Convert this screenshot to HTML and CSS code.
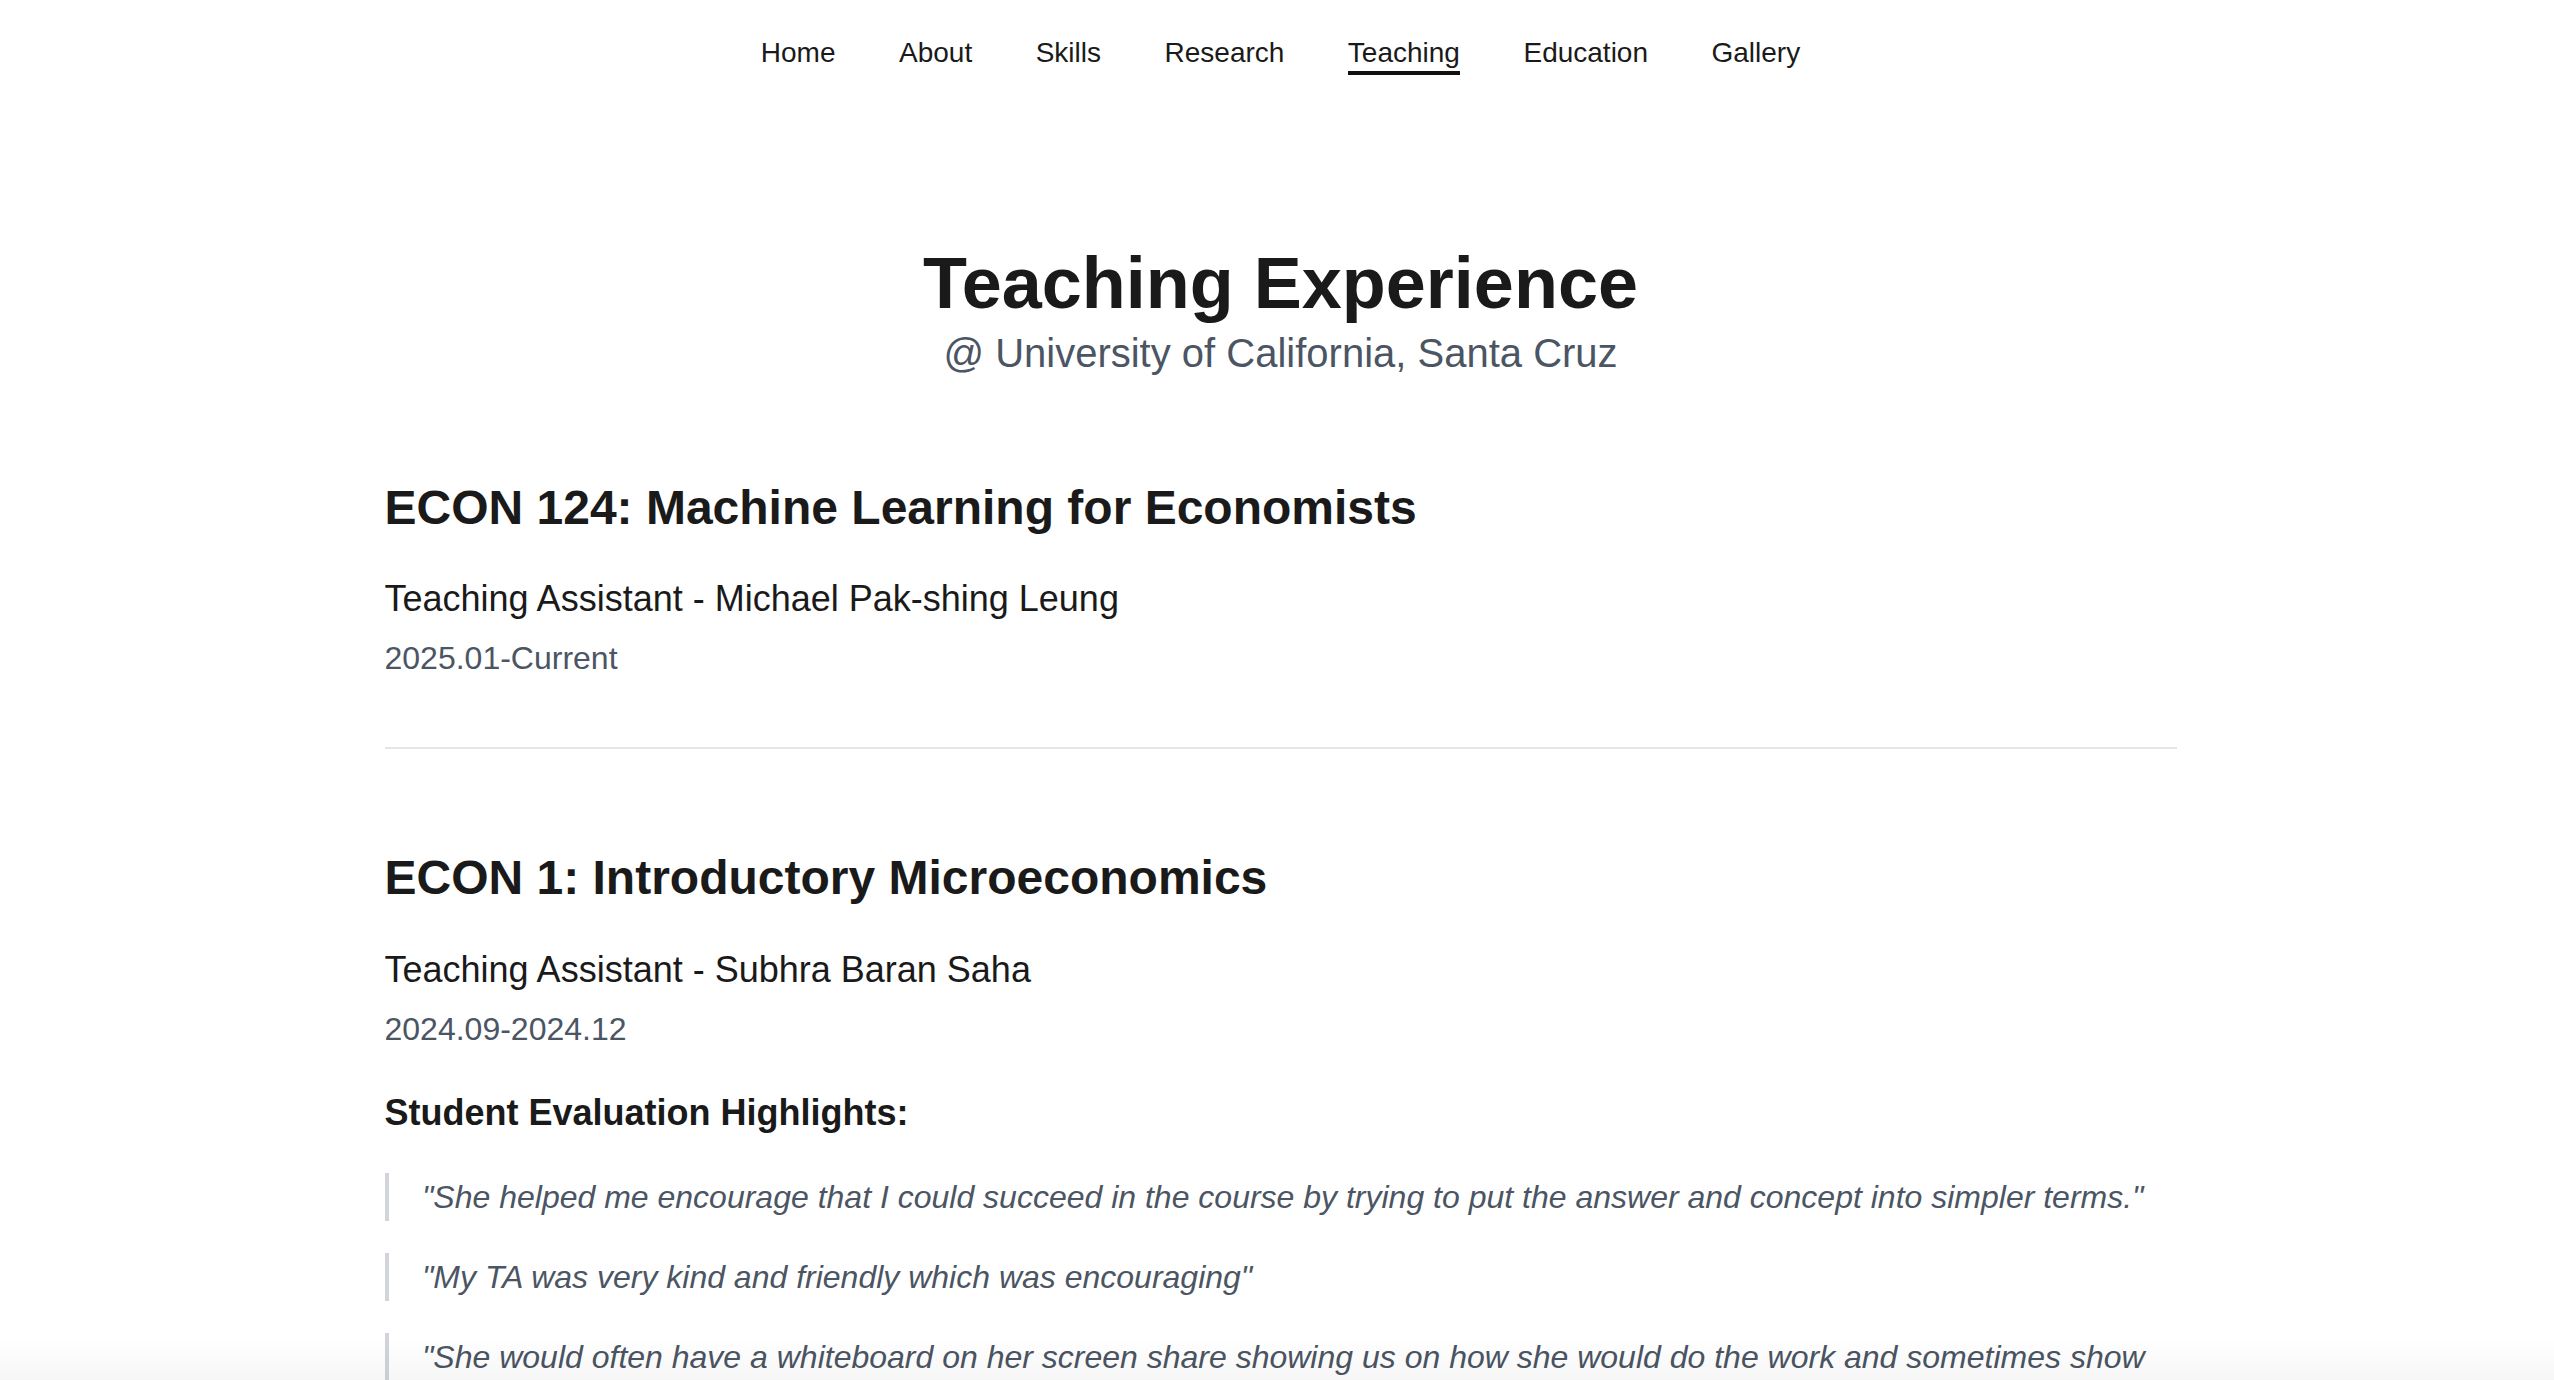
FILE: index.html
```html
<!DOCTYPE html>
<html lang="en">
<head>
<meta charset="utf-8">
<title>Teaching Experience</title>
<link rel="stylesheet" href="styles.css">
</head>
<body>
<nav class="topnav">
  <a class="nav-link" href="#">Home</a>
  <a class="nav-link" href="#">About</a>
  <a class="nav-link" href="#">Skills</a>
  <a class="nav-link" href="#">Research</a>
  <a class="nav-link active" href="#">Teaching</a>
  <a class="nav-link" href="#">Education</a>
  <a class="nav-link" href="#">Gallery</a>
</nav>
<main class="page">
  <header class="page-header">
    <h1 class="page-title">Teaching Experience</h1>
    <p class="page-subtitle">@ University of California, Santa Cruz</p>
  </header>

  <section class="course">
    <h2 class="course-title">ECON 124: Machine Learning for Economists</h2>
    <p class="course-role">Teaching Assistant - Michael Pak-shing Leung</p>
    <p class="course-date">2025.01-Current</p>
  </section>

  <hr class="divider">

  <section class="course">
    <h2 class="course-title">ECON 1: Introductory Microeconomics</h2>
    <p class="course-role">Teaching Assistant - Subhra Baran Saha</p>
    <p class="course-date">2024.09-2024.12</p>
    <h3 class="eval-title">Student Evaluation Highlights:</h3>
    <div class="quotes">
      <blockquote class="quote">"She helped me encourage that I could succeed in the course by trying to put the answer and concept into simpler terms."</blockquote>
      <blockquote class="quote">"My TA was very kind and friendly which was encouraging"</blockquote>
      <blockquote class="quote">"She would often have a whiteboard on her screen share showing us on how she would do the work and sometimes show us the steps to solve the problems."</blockquote>
    </div>
  </section>
</main>
<div class="bottom-fade"></div>
</body>
</html>
```
FILE: styles.css
```css
html, body {
  margin: 0;
  padding: 0;
  background: #ffffff;
}
body {
  font-family: "Liberation Sans", Arial, Helvetica, sans-serif;
  color: #1a1a1a;
  padding-left: 7px;
}

.topnav {
  display: flex;
  justify-content: center;
  gap: 63.5px;
  padding-top: 38.5px;
}
.nav-link {
  font-size: 28px;
  line-height: 1;
  color: #1a1a1a;
  text-decoration: none;
  padding-bottom: 4.5px;
  border-bottom: 4px solid transparent;
}
.nav-link.active {
  border-bottom-color: #111111;
}

.page {
  max-width: 1792px;
  margin: 0 auto;
}

.page-header {
  text-align: center;
  margin-top: 165px;
}
.page-title {
  margin: 0;
  font-size: 72px;
  line-height: 1.2;
  font-weight: 700;
  color: #1a1a1a;
}
.page-subtitle {
  margin: 3px 0 0;
  font-size: 40px;
  line-height: 1.2;
  color: #4b5563;
}

.course {
  padding-top: 101.5px;
}
.divider + .course {
  padding-top: 100.5px;
}
.course-title {
  margin: 0 0 37px;
  font-size: 48px;
  line-height: 1.2;
  font-weight: 700;
  color: #1a1a1a;
}
.course-role {
  margin: 0 0 8px;
  font-size: 36px;
  line-height: 52.8px;
  color: #1a1a1a;
}
.course-date {
  margin: 0;
  font-size: 32px;
  line-height: 1.5;
  color: #4b5563;
}

.divider {
  margin: 64.5px 0 0;
  border: 0;
  height: 2px;
  background: #e5e5e5;
}

.eval-title {
  margin: 34.5px 0 0;
  font-size: 36px;
  line-height: 52.8px;
  font-weight: 700;
  color: #1a1a1a;
}

.quotes {
  display: flex;
  flex-direction: column;
  gap: 32px;
  margin-top: 33px;
}
.quote {
  margin: 0;
  border-left: 4.8px solid #d1d5db;
  padding-left: 33.5px;
  font-size: 32px;
  line-height: 1.5;
  font-style: italic;
  color: #4b5563;
}

.bottom-fade {
  position: fixed;
  left: 0;
  right: 0;
  bottom: 0;
  height: 42px;
  background: linear-gradient(to bottom, rgba(0,0,0,0), rgba(0,0,0,0.035));
  pointer-events: none;
}
```
